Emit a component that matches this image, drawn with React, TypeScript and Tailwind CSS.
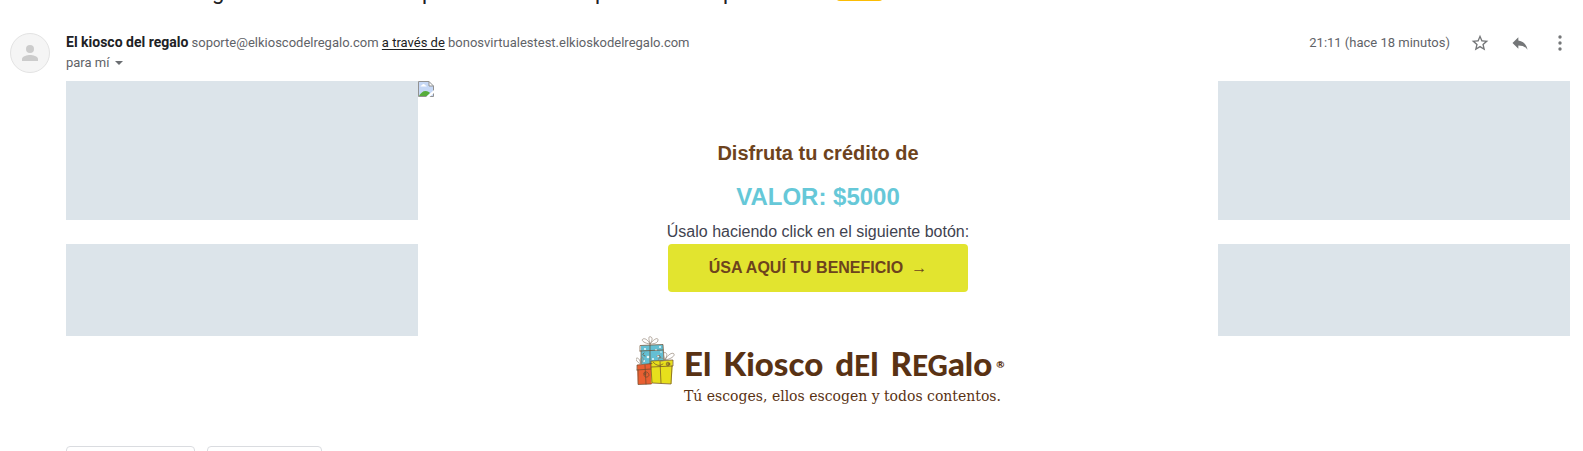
function Avatar() {
  return (
    <div className="flex size-10 shrink-0 items-center justify-center rounded-full border border-[#e3e3e3] bg-[#f5f5f5]">
      <svg viewBox="0 0 24 24" className="size-6 fill-[#cccccc]" aria-hidden="true">
        <circle cx="12" cy="8" r="4" />
        <path d="M12 14c-2.7 0-8 1.3-8 4v2h16v-2c0-2.700-5.300-4-8-4z" />
      </svg>
    </div>
  );
}

function BrokenImage() {
  return (
    <svg viewBox="0 0 16 16" className="size-4 self-start" role="img" aria-label="Imagen no disponible">
      <path d="M.5 .5H11L15.500 5V15.500H.5z" fill="#c6d8f6" />
      <path d="M1 15C2.500 12 5 10 7.500 10S11 11 12 12L9 15z" fill="#57ad3c" />
      <path d="M2.500 5.500q0-1.300 1.500-1.300q.6-1.400 2-1q1.500.2 1.500 1.300q1.200 0 1.200 1z" fill="#fff" />
      <path d="M11 .5V5h4.500z" fill="#fff" />
      <path d="M.5 15.500V.5H11L15.500 5V15.500H.5M11 .5V5h4.500" fill="none" stroke="#929292" />
      <path d="M8 16L16 9V12L11.500 16z" fill="#fff" />
    </svg>
  );
}

function Gifts() {
  return (
    <svg viewBox="0 0 40 50" className="h-[50px] w-10 shrink-0" fill="none" aria-hidden="true">
      <path d="M5 9.500L27 8.500L28 28H5z" fill="#64bfd3" />
      <path d="M1 29L16 27.500V48L2 48.500z" fill="#e95f32" />
      <path d="M15 25L37 24L35.500 48L15 47z" fill="#e7df1c" />
      <g fill="#e8f8fb">
        <circle cx="9" cy="13" r="1.100" /><circle cx="12" cy="21" r="1.300" />
        <circle cx="20" cy="14" r="1.100" /><circle cx="24" cy="11" r="1" />
        <circle cx="22" cy="20" r="1.200" /><circle cx="17" cy="23" r="1" />
        <circle cx="8" cy="25" r="1" /><circle cx="25" cy="16" r=".8" />
      </g>
      <g stroke="#6b4a2c" strokeWidth=".7" strokeLinecap="round" strokeLinejoin="round">
        <path d="M4 15V9.500L27 8.500L28 24M4 15L27 14M5 15V27M14 8V28" />
        <path d="M1 34V29L16 27.500M1 34L15 33M2 34V48.500L15 48M9 29L10 48" />
        <path d="M15 31V25L37 24V30L15 31L16 47L35 48L36 30M24 25L25 47" />
        <path d="M14 8C7 7 5 4 7 3S12 4 14 8C12 1 13 0 15 1S16 5 14 8C18 3 22 1 22 4S18 8 14 8" stroke="#938577" />
        <path d="M29 24C26 18 28 15 30 17S30 21 29 24C32 18 37 16 38 18S35 23 29 24C24 20 21 22 23 24S27 25 29 24" stroke="#938577" />
        <path d="M5 28C0 26-1 22 1 22S4 25 5 28C4 22 6 20 7 22S7 26 5 28" stroke="#938577" />
        <path d="M10 37C7 35 7 42 11 41S12 35 9 36S10 41 10 38M21 20q4-2 3 2M8 17q-3 2 1 3M17 26q5 6 10 2" />
        <circle cx="32" cy="28" r="1.800" /><circle cx="32" cy="28" r=".5" />
      </g>
    </svg>
  );
}

function Logo() {
  return (
    <div className="flex w-[364px] items-start text-[#593214]">
      <Gifts />
      <div className="ml-2 flex min-w-0 flex-col whitespace-nowrap">
        <div className="flex h-12 items-center gap-3 pt-2 font-[Lato,sans-serif] text-[33px] font-black">
          <span>El</span>
          <span>Kiosco</span>
          <span>d<span className="text-[28px]">E</span>l</span>
          <span className="flex items-center">
            <span>R<span className="text-[28px]">EG</span>alo</span>
            <span className="ml-1 text-[10px] leading-3">®</span>
          </span>
        </div>
        <p className="font-['DejaVu_Serif',serif] text-sm leading-6">Tú escoges, ellos escogen y todos contentos.</p>
      </div>
    </div>
  );
}

const iconButton = "flex size-5 items-center justify-center";

export default function App() {
  return (
    <main className="overflow-hidden bg-white font-[Roboto,sans-serif] text-[#5f6368]">
      <div className="flex h-8 items-start overflow-hidden pl-[212px] text-[22px] text-[#202124]" aria-hidden="true">
        <div className="-mt-6 flex leading-8">
          <span className="w-[210px]">g</span>
          <span className="w-[173px]">p</span>
          <span className="w-[128px]">p</span>
          <span className="w-[113px]">p</span>
          <span className="h-[25px] w-[47px] rounded bg-[#fbbc04]" />
        </div>
      </div>
      <div className="flex gap-4 pr-[13px] pl-[10px]">
        <div className="pt-px"><Avatar /></div>
        <div className="min-w-0 flex-1">
          <header className="flex h-[49px] items-start justify-between">
            <div className="text-[13px] leading-5">
              <div className="whitespace-nowrap">
                <strong className="text-sm leading-5 text-[#202124]">El kiosco del regalo</strong>{" "}
                soporte@elkioscodelregalo.com{" "}
                <a href="#via" className="text-[#202124] underline underline-offset-2">a través de</a>{" "}
                bonosvirtualestest.elkioskodelregalo.com
              </div>
              <button type="button" className="flex items-center gap-[6px]">
                para mí
                <svg viewBox="0 0 8 4" className="h-1 w-2 fill-[#6b6e72]" aria-hidden="true"><path d="M0 0h8L4 4z" /></svg>
              </button>
            </div>
            <div className="flex items-center pt-px text-[13px] leading-5 whitespace-nowrap">
              <time>21:11 (hace 18 minutos)</time>
              <button type="button" aria-label="Destacar" className={`${iconButton} ml-5`}>
                <svg viewBox="0 0 24 24" className="size-5 shrink-0 fill-[#747678]">
                  <path d="M22 9.240l-7.190-.62L12 2 9.190 8.630 2 9.240l5.460 4.730L5.820 21 12 17.270 18.180 21l-1.630-7.030L22 9.240zM12 15.400l-3.760 2.270 1-4.280-3.320-2.880 4.380-.38L12 6.100l1.710 4.040 4.380.38-3.320 2.880 1 4.280L12 15.400z" />
                </svg>
              </button>
              <button type="button" aria-label="Responder" className={`${iconButton} ml-5`}>
                <svg viewBox="0 0 24 24" className="size-5 shrink-0 fill-[#747678]">
                  <path d="M10 9V5l-7 7 7 7v-4.100c5 0 8.500 1.600 11 5.100-1-5-4-10-11-11z" />
                </svg>
              </button>
              <button type="button" aria-label="Más opciones" className={`${iconButton} ml-5`}>
                <svg viewBox="0 0 20 20" className="size-5 shrink-0 fill-[#747678]">
                  <circle cx="10" cy="4" r="1.700" /><circle cx="10" cy="10" r="1.700" /><circle cx="10" cy="16" r="1.700" />
                </svg>
              </button>
            </div>
          </header>
          <div className="grid grid-cols-[1fr_minmax(0,800px)_1fr] font-['Liberation_Sans',Arial,sans-serif]">
            <div className="flex flex-col gap-6">
              <div className="h-[139px] bg-[#dce4ea]" />
              <div className="h-[92px] bg-[#dce4ea]" />
            </div>
            <section className="flex flex-col items-center">
              <BrokenImage />
              <h1 className="mt-10 text-xl leading-8 font-bold text-[#6d431d]">Disfruta tu crédito de</h1>
              <p className="mt-3 text-2xl leading-8 font-bold text-[#66c8d8]">VALOR: $5000</p>
              <p className="mt-[7px] text-base leading-6 text-[#3f4350]">Úsalo haciendo click en el siguiente botón:</p>
              <a href="#beneficio" className="flex h-12 w-[300px] items-center justify-center gap-2 rounded bg-[#e2e42f] text-base font-bold text-[#6d431d]">
                ÚSA AQUÍ TU BENEFICIO <span className="font-['Liberation_Serif',serif] font-normal">→</span>
              </a>
              <div className="mt-11"><Logo /></div>
            </section>
            <div className="flex flex-col gap-6">
              <div className="h-[139px] bg-[#dce4ea]" />
              <div className="h-[92px] bg-[#dce4ea]" />
            </div>
          </div>
          <div className="mt-[38px] flex h-[5px] gap-3 overflow-hidden">
            <button type="button" aria-label="Responder mensaje" className="h-9 w-[129px] rounded border border-[#dadce0]" />
            <button type="button" aria-label="Reenviar mensaje" className="h-9 w-[115px] rounded border border-[#dadce0]" />
          </div>
        </div>
      </div>
    </main>
  );
}
